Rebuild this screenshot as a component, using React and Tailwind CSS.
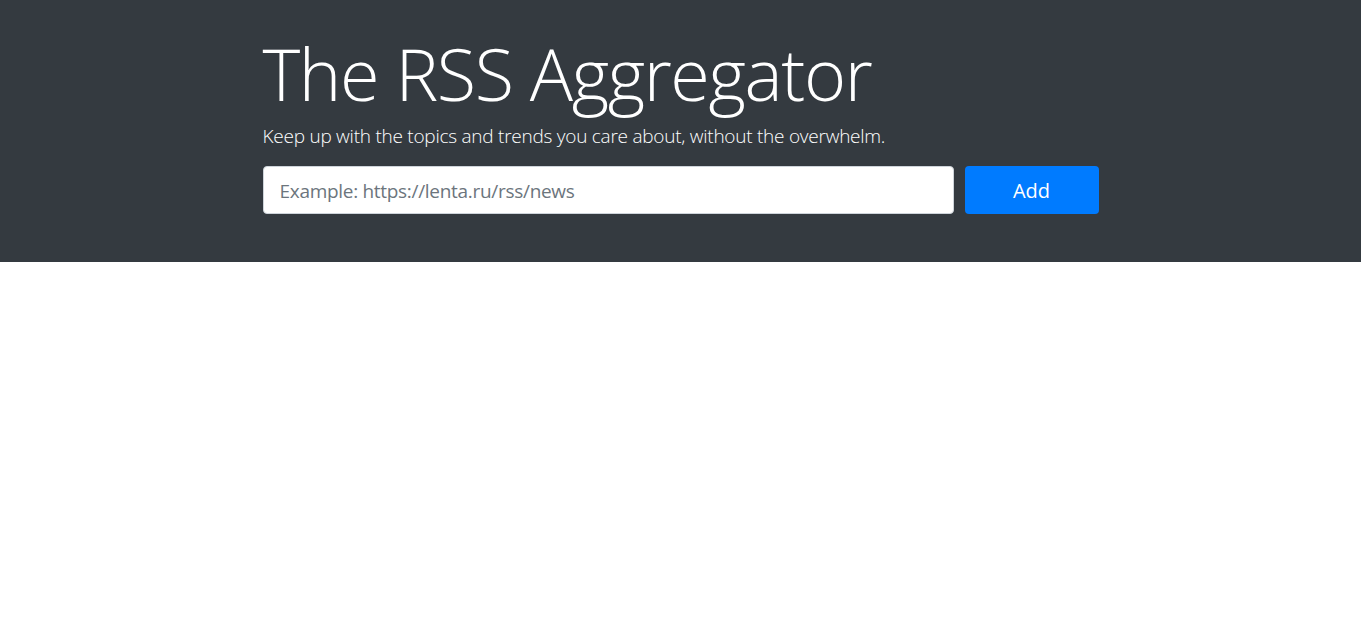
import { useState } from 'react';

const App = () => {
  const [url, setUrl] = useState('');

  return (
    <div className="min-h-screen bg-white" style={{ fontFamily: '"Open Sans", "Noto Sans", sans-serif' }}>
      <section className="bg-[#343a40] h-[262px] pt-[30px]">
        <div className="w-[836px] mx-auto">
          <h1 className="text-[72px] leading-[86px] font-light text-white tracking-[-1.4px]">The RSS Aggregator</h1>
          <p className="text-[19px] leading-[30px] font-light text-white mt-[5px] tracking-[-0.25px]">
            Keep up with the topics and trends you care about, without the overwhelm.
          </p>
          <form className="flex gap-[11px] mt-[15px]" onSubmit={(e) => e.preventDefault()}>
            <input
              value={url}
              onChange={(e) => setUrl(e.target.value)}
              placeholder="Example: https://lenta.ru/rss/news"
              className="flex-1 h-[48px] rounded-[4px] border border-[#ced4da] bg-white px-4 pt-[2px] text-[19px] tracking-[-0.3px] text-[#495057] placeholder:text-[#6c757d] outline-none"
            />
            <button
              type="submit"
              className="w-[134px] h-[48px] rounded-[4px] bg-[#007bff] text-white text-[20px] pt-[2px]"
            >
              Add
            </button>
          </form>
        </div>
      </section>
    </div>
  );
};

export default App;
